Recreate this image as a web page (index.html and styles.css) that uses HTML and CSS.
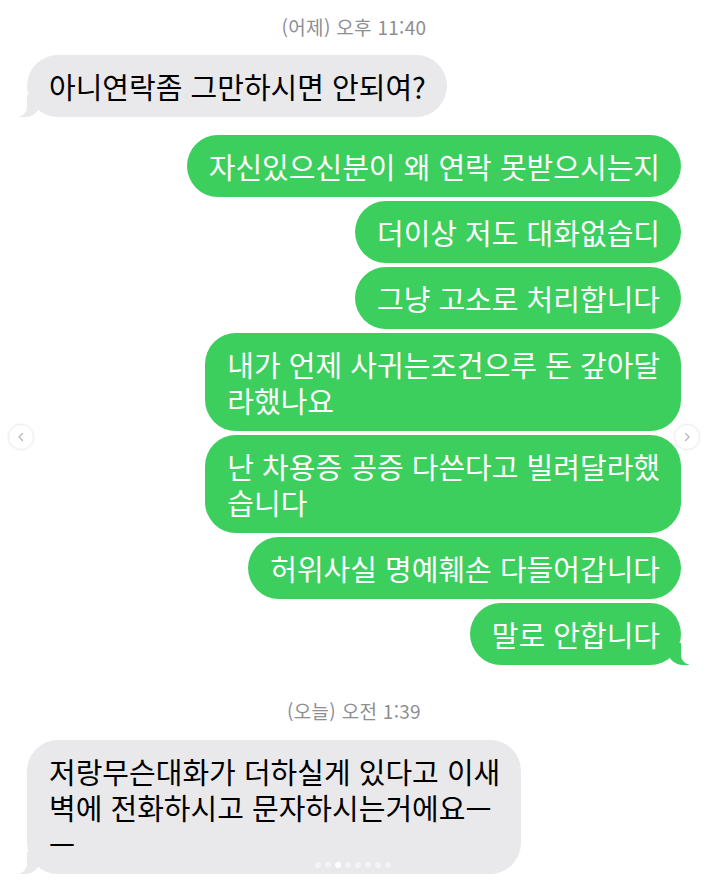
FILE: index.html
```html
<!DOCTYPE html>
<html lang="ko">
<head>
  <meta charset="UTF-8">
  <meta name="viewport" content="width=device-width, initial-scale=1.0">
  <title>메시지</title>
  <link rel="stylesheet" href="styles.css">
</head>
<body>
  <div class="slide">
    <div class="thread">
      <p class="stamp">(어제) 오후 11:40</p>
      <div class="msg in tail">아니연락좀 그만하시면 안되여?</div>

      <div class="group">
        <div class="msg out">자신있으신분이 왜 연락 못받으시는지</div>
        <div class="msg out">더이상 저도 대화없습디</div>
        <div class="msg out">그냥 고소로 처리합니다</div>
        <div class="msg out">내가 언제 사귀는조건으루 돈 갚아달<br>라했나요</div>
        <div class="msg out">난 차용증 공증 다쓴다고 빌려달라했<br>습니다</div>
        <div class="msg out">허위사실 명예훼손 다들어갑니다</div>
        <div class="msg out tail">말로 안합니다</div>
      </div>

      <p class="stamp stamp-later">(오늘) 오전 1:39</p>
      <div class="msg in tail">저랑무슨대화가 더하실게 있다고 이새<br>벽에 전화하시고 문자하시는거에요—<br>—</div>
    </div>

    <button class="nav nav-prev" aria-label="이전">
      <svg width="12" height="12" viewBox="0 0 12 12"><path d="M7.5 2.5 L4 6 L7.5 9.5" fill="none" stroke="#b8b8b8" stroke-width="1.4" stroke-linecap="round" stroke-linejoin="round"/></svg>
    </button>
    <button class="nav nav-next" aria-label="다음">
      <svg width="12" height="12" viewBox="0 0 12 12"><path d="M4.5 2.5 L8 6 L4.5 9.5" fill="none" stroke="#b8b8b8" stroke-width="1.4" stroke-linecap="round" stroke-linejoin="round"/></svg>
    </button>

    <div class="dots">
      <span></span><span></span><span class="on"></span><span></span><span></span><span></span><span></span><span></span>
    </div>
  </div>
</body>
</html>
```

FILE: styles.css
```css
html, body {
  margin: 0;
  height: 100%;
  overflow: hidden;
  background: #fff;
}

body {
  font-family: 'Noto Sans CJK KR', 'Noto Sans', sans-serif;
  color: #000;
}

.slide {
  position: relative;
  height: 883px;
}

.thread {
  display: flex;
  flex-direction: column;
  align-items: flex-start;
  padding: 16px 24px 0 27px;
}

.stamp {
  align-self: center;
  margin: 0 0 17px;
  font-size: 19px;
  line-height: 22px;
  color: #8e8e93;
  letter-spacing: 0.3px;
}

.stamp-later {
  margin-top: 35px;
  margin-bottom: 18px;
}

.group {
  align-self: stretch;
  display: flex;
  flex-direction: column;
  align-items: flex-end;
  gap: 4px;
  margin-top: 18px;
}

.msg {
  position: relative;
  padding: 13px 21px 13px 22px;
  font-size: 29px;
  line-height: 36px;
  border-radius: 31px;
  white-space: nowrap;
}

.msg.in {
  background: #e9e9eb;
  color: #000;
}

.msg.out {
  background: #3ccf5e;
  color: #fff;
}

/* bubble tails */
.msg.tail::before,
.msg.tail::after {
  content: "";
  position: absolute;
  bottom: 0;
  height: 22px;
}

.msg.in.tail::before {
  left: -8px;
  width: 22px;
  background: #e9e9eb;
  border-bottom-right-radius: 16px;
}

.msg.in.tail::after {
  left: -12px;
  width: 12px;
  background: #fff;
  border-bottom-right-radius: 10px;
}

.msg.out.tail::before {
  right: -8px;
  width: 22px;
  background: #3ccf5e;
  border-bottom-left-radius: 16px;
}

.msg.out.tail::after {
  right: -12px;
  width: 12px;
  background: #fff;
  border-bottom-left-radius: 10px;
}

/* carousel controls */
.nav {
  position: absolute;
  top: 424px;
  width: 26px;
  height: 26px;
  padding: 0;
  border: 1px solid #ececec;
  border-radius: 50%;
  background: rgba(255, 255, 255, 0.9);
  box-shadow: 0 0 3px rgba(0, 0, 0, 0.06);
  display: flex;
  align-items: center;
  justify-content: center;
}

.nav-prev { left: 8px; }
.nav-next { right: 5px; }

.dots {
  position: absolute;
  left: 315px;
  top: 862px;
  display: flex;
  gap: 4px;
}

.dots span {
  width: 6px;
  height: 6px;
  border-radius: 50%;
  background: rgba(255, 255, 255, 0.45);
}

.dots span.on {
  background: #fff;
}
```
